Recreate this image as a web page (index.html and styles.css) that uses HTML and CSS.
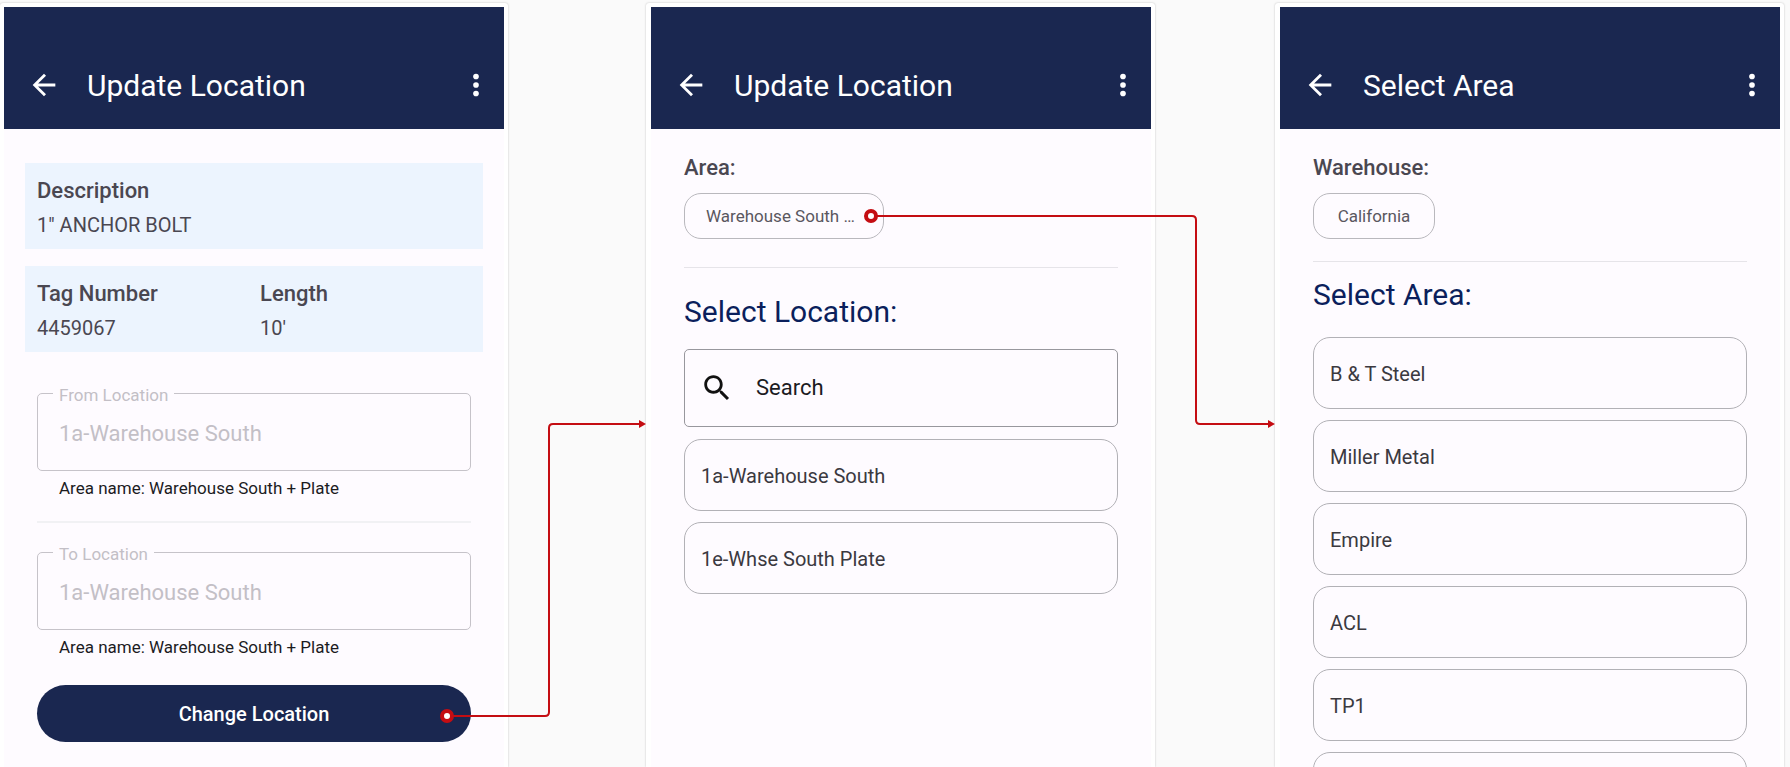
FILE: index.html
```html
<!DOCTYPE html>
<html lang="en">
<head>
    <meta charset="UTF-8">
    <meta name="viewport" content="width=device-width, initial-scale=1.0">
    <title>Update Location</title>
    <link rel="stylesheet" href="styles.css">
</head>
<body>

    <svg class="sprite" aria-hidden="true">
        <symbol id="icon-back" viewBox="0 0 24 24">
            <path d="M20 11H7.83l5.59-5.59L12 4l-8 8 8 8 1.41-1.41L7.83 13H20v-2z"/>
        </symbol>
        <symbol id="icon-more" viewBox="0 0 24 24">
            <circle cx="12" cy="6" r="2"/>
            <circle cx="12" cy="12" r="2"/>
            <circle cx="12" cy="18" r="2"/>
        </symbol>
        <symbol id="icon-search" viewBox="0 0 24 24">
            <path d="M15.5 14h-.79l-.28-.27C15.41 12.59 16 11.11 16 9.5 16 5.91 13.09 3 9.5 3S3 5.91 3 9.5 5.91 16 9.5 16c1.61 0 3.09-.59 4.23-1.57l.27.28v.79l5 4.99L20.49 19l-4.99-5zm-6 0C7.01 14 5 11.99 5 9.5S7.01 5 9.5 5 14 7.01 14 9.5 11.99 14 9.5 14z"/>
        </symbol>
    </svg>

    <main class="flow">

        <!-- Update location: summary -->
        <section class="phone phone-first">
            <header class="app-bar">
                <button type="button" class="icon-btn" aria-label="Back"><svg><use href="#icon-back"/></svg></button>
                <h1>Update Location</h1>
                <button type="button" class="icon-btn" aria-label="More"><svg><use href="#icon-more"/></svg></button>
            </header>
            <div class="content content-summary">
                <dl class="info">
                    <div>
                        <dt>Description</dt>
                        <dd>1" ANCHOR BOLT</dd>
                    </div>
                </dl>
                <dl class="info">
                    <div>
                        <dt>Tag Number</dt>
                        <dd>4459067</dd>
                    </div>
                    <div>
                        <dt>Length</dt>
                        <dd>10'</dd>
                    </div>
                </dl>
                <form class="move-form">
                    <div class="field">
                        <label for="from">From Location</label>
                        <input type="text" id="from" value="1a-Warehouse South" disabled>
                        <p>Area name: Warehouse South + Plate</p>
                    </div>
                    <hr>
                    <div class="field">
                        <label for="to">To Location</label>
                        <input type="text" id="to" value="1a-Warehouse South" disabled>
                        <p>Area name: Warehouse South + Plate</p>
                    </div>
                    <button type="button" class="primary">Change Location</button>
                </form>
            </div>
        </section>

        <div class="gap gap-location">
            <svg class="connector" width="208" height="308" viewBox="0 0 208 308">
                <path class="line" d="M9 300H107Q111 300 111 296V12Q111 8 115 8H202"/>
                <path class="arrow" d="M201 4L208 8L201 12Z"/>
                <circle class="dot" cx="9" cy="300" r="5"/>
            </svg>
        </div>

        <!-- Update location: pick a location -->
        <section class="phone">
            <header class="app-bar">
                <button type="button" class="icon-btn" aria-label="Back"><svg><use href="#icon-back"/></svg></button>
                <h1>Update Location</h1>
                <button type="button" class="icon-btn" aria-label="More"><svg><use href="#icon-more"/></svg></button>
            </header>
            <div class="content content-location">
                <h3>Area:</h3>
                <button type="button" class="chip">Warehouse South …</button>
                <hr>
                <h2>Select Location:</h2>
                <label class="search">
                    <svg aria-hidden="true"><use href="#icon-search"/></svg>
                    <input type="text" placeholder="Search" aria-label="Search">
                </label>
                <div class="options">
                    <button type="button">1a-Warehouse South</button>
                    <button type="button">1e-Whse South Plate</button>
                </div>
            </div>
        </section>

        <div class="gap gap-area">
            <svg class="connector" width="413" height="224" viewBox="0 0 413 224">
                <path class="line" d="M9 8H330Q334 8 334 12V212Q334 216 338 216H407"/>
                <path class="arrow" d="M406 212L413 216L406 220Z"/>
                <circle class="dot" cx="9" cy="8" r="5"/>
            </svg>
        </div>

        <!-- Select area -->
        <section class="phone">
            <header class="app-bar">
                <button type="button" class="icon-btn" aria-label="Back"><svg><use href="#icon-back"/></svg></button>
                <h1>Select Area</h1>
                <button type="button" class="icon-btn" aria-label="More"><svg><use href="#icon-more"/></svg></button>
            </header>
            <div class="content content-area">
                <h3>Warehouse:</h3>
                <button type="button" class="chip">California</button>
                <hr>
                <h2>Select Area:</h2>
                <div class="options">
                    <button type="button">B &amp; T Steel</button>
                    <button type="button">Miller Metal</button>
                    <button type="button">Empire</button>
                    <button type="button">ACL</button>
                    <button type="button">TP1</button>
                    <button type="button"></button>
                </div>
            </div>
        </section>

    </main>

</body>
</html>
```
FILE: styles.css
```css
* {
    box-sizing: border-box;
}
body {
    margin: 0;
    height: 100vh;
    overflow: hidden;
    background: #fafafa;
    font-family: Roboto, Arial, sans-serif;
    color: #4a4751;
}
h1, h2, h3, p, dl, dd {
    margin: 0;
}
button, input {
    font-family: inherit;
}
hr {
    border: none;
    height: 1px;
    margin: 0;
    background: #e6e4e9;
}
.sprite {
    display: none;
}
.flow {
    display: flex;
    height: 100vh;
    padding: 3px 6px 0 0;
    overflow: hidden;
}

/* phones */
.phone {
    flex: 1;
    min-width: 0;
    padding: 4px 4px 0 5px;
    background: #fff;
    border-radius: 3px 3px 0 0;
    box-shadow: 0 0 2px rgba(0, 0, 0, 0.25);
}
.phone-first {
    padding-left: 4px;
}
.app-bar {
    display: flex;
    align-items: flex-end;
    height: 122px;
    padding: 0 11px 27px 23px;
    background: #1a2750;
    color: #fff;
}
.app-bar h1 {
    flex: 1;
    margin-left: 26px;
    font-size: 30px;
    line-height: 32px;
    font-weight: 400;
}
.icon-btn {
    width: 34px;
    height: 34px;
    padding: 0;
    border: none;
    background: none;
    color: #fff;
}
.icon-btn svg, .search svg {
    display: block;
    width: 34px;
    height: 34px;
    fill: currentColor;
}
.content {
    min-height: calc(100vh - 129px);
    padding: 25px 33px 0;
    background: #fefbff;
}

/* summary */
.content-summary {
    padding: 34px 21px 0;
}
.info {
    display: grid;
    grid-template-columns: 1fr 1fr;
    height: 86px;
    margin-bottom: 17px;
    padding: 11px 0 0 12px;
    background: #ecf4fe;
}
.info dt, .info dd {
    line-height: 34px;
}
.info dt, h3 {
    font-size: 22px;
    font-weight: 500;
}
.info dd {
    font-size: 20px;
}
.move-form {
    padding: 24px 12px 0;
}
.field {
    position: relative;
}
.field label {
    position: absolute;
    top: -8px;
    left: 16px;
    padding: 0 6px;
    background: #fefbff;
    color: #c3bfc6;
    font-size: 17px;
    line-height: 20px;
}
.field input {
    display: block;
    width: 100%;
    height: 78px;
    padding: 2px 21px 0;
    border: 1px solid #c6c3c9;
    border-radius: 5px;
    background: none;
    color: #c3bfc6;
    font-size: 22px;
}
.field p {
    padding: 7px 22px 8px;
    color: #1c1b1f;
    font-size: 17px;
    line-height: 20px;
}
.move-form hr {
    height: 2px;
    margin: 15px 0 29px;
    background: #f1f1f4;
}
.primary {
    width: 100%;
    height: 57px;
    margin-top: 20px;
    border: none;
    border-radius: 29px;
    background: #1a2750;
    color: #fff;
    font-size: 20px;
    font-weight: 500;
}

/* pickers */
h3 {
    margin-bottom: 11px;
    line-height: 28px;
}
h2 {
    color: #0b1f5c;
    font-size: 30px;
    line-height: 36px;
    font-weight: 400;
}
.chip {
    display: block;
    min-width: 122px;
    height: 46px;
    padding: 0 21px;
    border: 1px solid #b9b8bd;
    border-radius: 17px;
    background: none;
    color: #5a5760;
    font-size: 17px;
}
.content-location .chip {
    width: 200px;
    text-align: left;
    white-space: nowrap;
}
.content-location hr {
    margin: 28px 0 26px;
}
.content-area hr {
    margin: 22px 0 15px;
}
.search {
    display: flex;
    align-items: center;
    gap: 22px;
    height: 78px;
    margin: 19px 0 12px;
    padding: 0 15px;
    border: 1px solid #98979d;
    border-radius: 5px;
    color: #111;
}
.search input {
    flex: 1;
    min-width: 0;
    padding: 0 0 2px;
    border: none;
    outline: none;
    background: none;
    font-size: 22px;
}
.search input::placeholder {
    color: #1c1b1f;
    opacity: 1;
}
.options {
    display: flex;
    flex-direction: column;
    gap: 11px;
}
.content-area .options {
    margin-top: 24px;
}
.options button {
    flex: none;
    height: 72px;
    padding: 2px 16px 0;
    border: 1px solid #b2b1b6;
    border-radius: 17px;
    background: none;
    color: #3b393f;
    font-size: 20px;
    text-align: left;
}

/* connectors drawn over the phones */
.gap {
    position: relative;
    flex: 0 0 138px;
}
.gap-area {
    flex-basis: 120px;
}
.connector {
    position: absolute;
    right: 0;
    top: 413px;
    z-index: 1;
}
.gap-area .connector {
    top: 205px;
}
.line {
    fill: none;
    stroke: #c40d12;
    stroke-width: 2;
}
.arrow {
    fill: #c40d12;
}
.dot {
    fill: #fff;
    stroke: #c40d12;
    stroke-width: 4;
}
```
